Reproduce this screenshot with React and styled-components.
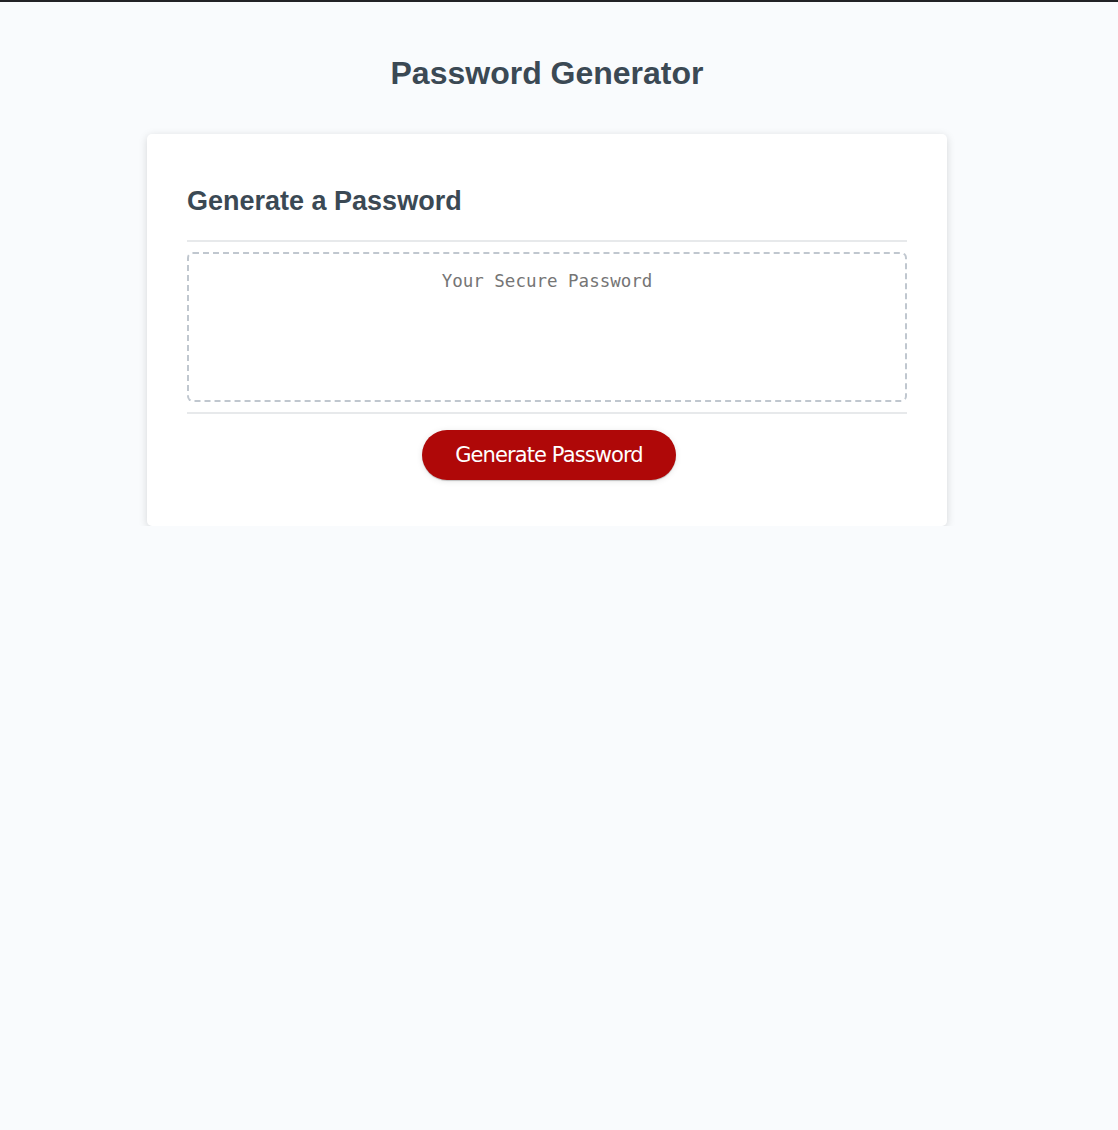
import React from "react";
import styled, { createGlobalStyle } from "styled-components";

const GlobalStyle = createGlobalStyle`
  * { box-sizing: border-box; }
  html, body { margin: 0; padding: 0; }
  body {
    background-color: #f9fbfd;
    font-family: "Liberation Sans", Arial, sans-serif;
  }
`;

const TopStrip = styled.div`
  height: 2px;
  background: #222326;
`;

const Wrapper = styled.div`
  padding: 32px 44px 0 20px;
`;

const Header = styled.header`
  text-align: center;
  padding: 0 20px 20px;
  color: hsl(206, 17%, 28%);
`;

const Title = styled.h1`
  margin: 21.44px 0;
  font-size: 32px;
  font-weight: 700;
  line-height: 37px;
`;

const Card = styled.div`
  background-color: #fff;
  border-radius: 5px;
  box-shadow: rgba(0, 0, 0, 0.15) 0 2px 8px 0;
  color: hsl(206, 17%, 28%);
  font-size: 18px;
  margin: 0 auto;
  max-width: 800px;
  padding: 30px 40px;
`;

const Divider = styled.div`
  width: 100%;
  height: 2px;
  background: #e7e9eb;
`;

const CardHeader = styled.div``;

const CardTitle = styled.h2`
  margin: 22.4px 0;
  font-size: 27px;
  font-weight: 700;
  line-height: 31px;
`;

const CardBody = styled.div`
  min-height: 100px;
`;

const PasswordBox = styled.div`
  display: block;
  width: 100%;
  height: 150px;
  margin: 10px 0;
  padding: 16px 15px 0;
  border: 2px dashed #c0c7cf;
  border-radius: 6px;
  text-align: center;
  font-family: "DejaVu Sans Mono", "Liberation Mono", monospace;
  font-size: 17.5px;
  line-height: 22px;
  color: #757575;
  overflow: hidden;
`;

const CardFooter = styled.div`
  text-align: center;
`;

const Button = styled.button`
  border: none;
  background-color: hsl(360, 91%, 36%);
  border-radius: 25px;
  box-shadow: rgba(0, 0, 0, 0.1) 0 1px 6px 0, rgba(0, 0, 0, 0.2) 0 1px 1px 0;
  color: #fff;
  display: inline-block;
  font-family: "DejaVu Sans", Verdana, sans-serif;
  font-size: 21px;
  letter-spacing: -0.9px;
  line-height: 22px;
  height: 50px;
  width: 254px;
  margin: 16px 16px 16px 20px;
  padding: 14px 0;
  text-align: center;
  cursor: pointer;
`;

export default function App() {
  return (
    <>
      <GlobalStyle />
      <TopStrip />
      <Wrapper>
        <Header>
          <Title>Password Generator</Title>
        </Header>
        <Card>
          <CardHeader>
            <CardTitle>Generate a Password</CardTitle>
            <Divider />
          </CardHeader>
          <CardBody>
            <PasswordBox aria-label="Generated Password">Your Secure Password</PasswordBox>
          </CardBody>
          <CardFooter>
            <Divider />
            <Button type="button">Generate Password</Button>
          </CardFooter>
        </Card>
      </Wrapper>
    </>
  );
}
